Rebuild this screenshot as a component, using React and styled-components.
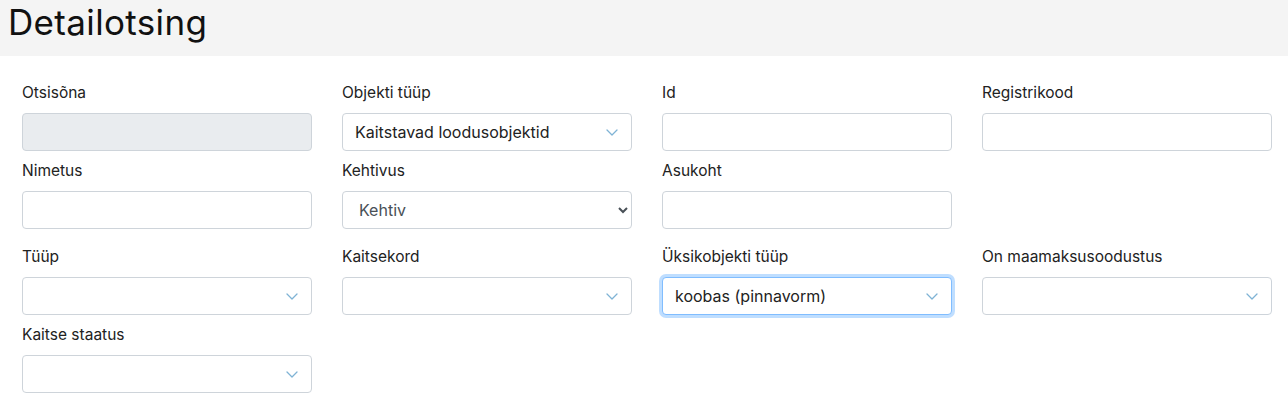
import styled, { createGlobalStyle } from 'styled-components';

const GlobalStyle = createGlobalStyle`
  html, body {
    margin: 0;
    padding: 0;
    background: #fff;
  }
  body {
    font-family: Inter, "Noto Sans", "Liberation Sans", sans-serif;
    color: #212529;
  }
`;

const Header = styled.div`
  height: 56px;
  background-color: #f4f4f4;
  padding-left: 8px;
`;

const Title = styled.h1`
  margin: 0;
  font-size: 35px;
  line-height: 44px;
  font-weight: 400;
  color: #111;
  letter-spacing: 0.35px;
`;

const Form = styled.div`
  padding: 26px 16px 0 22px;
`;

const Row = styled.div`
  display: grid;
  grid-template-columns: repeat(4, 290px);
  column-gap: 30px;
  margin-bottom: ${({ $gap }) => $gap ?? 9}px;
`;

const Field = styled.div`
  display: flex;
  flex-direction: column;
`;

const Label = styled.label`
  font-size: 15.5px;
  line-height: 22px;
  color: #222;
  margin-bottom: 9px;
`;

const Input = styled.input`
  box-sizing: border-box;
  height: 38px;
  width: 100%;
  border: 1px solid #ced4da;
  border-radius: 4px;
  background-color: ${({ disabled }) => (disabled ? '#e9ecef' : '#fff')};
  font: inherit;
  font-size: 16px;
  padding: 0 12px;
  outline: none;
`;

const SelectBox = styled.div`
  box-sizing: border-box;
  height: 38px;
  display: flex;
  align-items: center;
  justify-content: space-between;
  padding: 0 13px 0 12px;
  border: 1px solid ${({ $focused }) => ($focused ? '#80bdff' : '#ced4da')};
  border-radius: 4px;
  background: #fff;
  box-shadow: ${({ $focused }) =>
    $focused ? '0 0 0 3px rgba(0, 123, 255, 0.25)' : 'none'};
  font-size: 16px;
  color: #222;
`;

const NativeSelect = styled.select`
  box-sizing: border-box;
  height: 38px;
  width: 100%;
  border: 1px solid #ced4da;
  border-radius: 4px;
  background: #fff;
  font: inherit;
  font-size: 16px;
  color: #495057;
  padding: 0 6px 0 12px;
  outline: none;
`;

const Chevron = () => (
  <svg width="12" height="7" viewBox="0 0 12 7" fill="none">
    <path d="M1 1l5 5 5-5" stroke="#7fb3d5" strokeWidth="1.3" strokeLinecap="round" strokeLinejoin="round" />
  </svg>
);

const Select = ({ value, focused }) => (
  <SelectBox $focused={focused}>
    <span>{value}</span>
    <Chevron />
  </SelectBox>
);

export default function App() {
  return (
    <>
      <GlobalStyle />
      <Header>
        <Title>Detailotsing</Title>
      </Header>
      <Form>
        <Row>
          <Field>
            <Label>Otsisõna</Label>
            <Input disabled />
          </Field>
          <Field>
            <Label>Objekti tüüp</Label>
            <Select value="Kaitstavad loodusobjektid" />
          </Field>
          <Field>
            <Label>Id</Label>
            <Input />
          </Field>
          <Field>
            <Label>Registrikood</Label>
            <Input />
          </Field>
        </Row>
        <Row $gap={17}>
          <Field>
            <Label>Nimetus</Label>
            <Input />
          </Field>
          <Field>
            <Label>Kehtivus</Label>
            <NativeSelect defaultValue="Kehtiv">
              <option>Kehtiv</option>
              <option>Kehtetu</option>
            </NativeSelect>
          </Field>
          <Field>
            <Label>Asukoht</Label>
            <Input />
          </Field>
        </Row>
        <Row>
          <Field>
            <Label>Tüüp</Label>
            <Select />
          </Field>
          <Field>
            <Label>Kaitsekord</Label>
            <Select />
          </Field>
          <Field>
            <Label>Üksikobjekti tüüp</Label>
            <Select value="koobas (pinnavorm)" focused />
          </Field>
          <Field>
            <Label>On maamaksusoodustus</Label>
            <Select />
          </Field>
        </Row>
        <Row>
          <Field>
            <Label>Kaitse staatus</Label>
            <Select />
          </Field>
        </Row>
      </Form>
    </>
  );
}
